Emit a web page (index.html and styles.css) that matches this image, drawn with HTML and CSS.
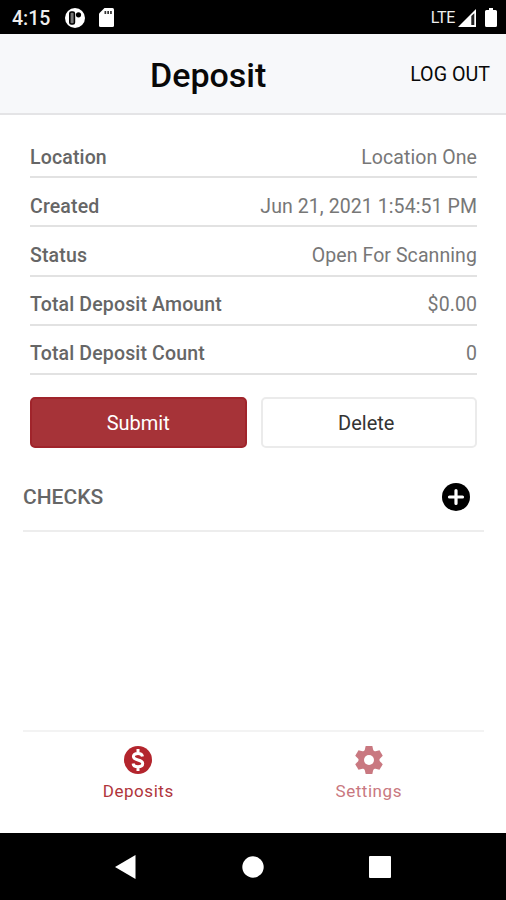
FILE: index.html
```html
<!DOCTYPE html>
<html lang="en">
<head>
    <meta charset="UTF-8">
    <meta name="viewport" content="width=device-width, initial-scale=1.0">
    <title>Deposit</title>
    <link rel="stylesheet" href="styles.css">
</head>
<body>
    <div class="status-bar">
        <span class="time">4:15</span>
        <svg class="icon-app" width="20" height="20" viewBox="0 0 20 20">
            <circle cx="10" cy="10" r="10" fill="#fff"/>
            <rect x="4.800" y="4" width="4.600" height="12" rx="1.500" fill="#777" stroke="#000" stroke-width="1.600"/>
            <circle cx="13.500" cy="6.800" r="2.600" fill="#000"/>
        </svg>
        <svg class="icon-sd" width="15" height="19" viewBox="0 0 15 19">
            <path d="M5.500 0H13.500q1.500 0 1.500 1.500V17.500q0 1.500-1.500 1.500H1.500Q0 19 0 17.500V5.500z" fill="#fff"/>
            <path d="M5.500 3h1.700v3H5.500zM8.300 3H10v3H8.300zM11.100 3h1.700v3h-1.700z" fill="#333"/>
        </svg>
        <span class="network">LTE</span>
        <svg class="icon-signal" width="18" height="18" viewBox="0 0 18 18">
            <path d="M18 0v18H0z" fill="#fff"/>
            <path d="M13.300 7l3-2.800v11.800h-3z" fill="#222"/>
        </svg>
        <svg class="icon-battery" width="12" height="19" viewBox="0 0 12 19">
            <path d="M4 0h4v2h2.500q1.500 0 1.500 1.500v14q0 1.500-1.500 1.500h-9Q0 19 0 17.500v-14Q0 2 1.500 2H4z" fill="#fff"/>
        </svg>
    </div>

    <div class="header">
        <h1 class="title">Deposit</h1>
        <a class="logout">LOG OUT</a>
    </div>

    <div class="content">
        <div class="details">
            <div class="row">
                <span class="label">Location</span>
                <span class="value">Location One</span>
            </div>
            <div class="row">
                <span class="label">Created</span>
                <span class="value">Jun 21, 2021 1:54:51 PM</span>
            </div>
            <div class="row">
                <span class="label">Status</span>
                <span class="value">Open For Scanning</span>
            </div>
            <div class="row">
                <span class="label">Total Deposit Amount</span>
                <span class="value">$0.00</span>
            </div>
            <div class="row">
                <span class="label">Total Deposit Count</span>
                <span class="value">0</span>
            </div>
        </div>

        <div class="buttons">
            <button class="button submit">Submit</button>
            <button class="button delete">Delete</button>
        </div>

        <div class="checks">
            <span>CHECKS</span>
            <svg class="icon-add" width="28" height="28" viewBox="0 0 28 28">
                <circle cx="14" cy="14" r="14" fill="#000"/>
                <path d="M14 7.500v13M7.500 14h13" stroke="#fff" stroke-width="3.200" stroke-linecap="round"/>
            </svg>
        </div>
    </div>

    <div class="tabs">
        <div class="tab active">
            <svg width="28" height="28" viewBox="0 0 28 28">
                <circle cx="14" cy="14" r="14" fill="#b3252d"/>
                <path d="M14 3v4M14 21v4M18.500 10.500C18.200 8.400 16.500 7.400 14 7.400c-2.700 0-4.600 1.100-4.600 3.200 0 2.200 1.800 2.700 4.600 3.400s4.700 1.400 4.700 3.500-2 3.200-4.700 3.200c-2.800 0-4.700-1.100-4.900-3.200" fill="none" stroke="#fff" stroke-width="3"/>
            </svg>
            <span>Deposits</span>
        </div>
        <div class="tab">
            <svg width="28" height="28" viewBox="0 0 28 28">
                <g fill="#c97880">
                    <circle cx="14" cy="14" r="10.500"/>
                    <path id="tooth" d="M9.500 5l1.200-5h6.600l1.200 5v18l-1.200 5h-6.600l-1.200-5z"/>
                    <use href="#tooth" transform="rotate(60 14 14)"/>
                    <use href="#tooth" transform="rotate(120 14 14)"/>
                </g>
                <circle cx="14" cy="14" r="5" fill="#fff"/>
            </svg>
            <span>Settings</span>
        </div>
    </div>

    <!-- Android navigation -->
    <div class="nav-bar">
        <svg width="21" height="24" viewBox="0 0 21 24"><path d="M20.500 0v24L0 12z" fill="#fff"/></svg>
        <svg width="22" height="22" viewBox="0 0 22 22"><circle cx="11" cy="11" r="10.700" fill="#fff"/></svg>
        <svg width="22" height="22" viewBox="0 0 22 22"><rect width="22" height="22" rx="1" fill="#fff"/></svg>
    </div>
</body>
</html>
```
FILE: styles.css
```css
* {
    box-sizing: border-box;
}

body {
    margin: 0;
    height: 900px;
    display: flex;
    flex-direction: column;
    background-color: #fff;
    font-family: Roboto, sans-serif;
    color: #666;
}

svg {
    display: block;
    flex-shrink: 0;
}

.status-bar {
    height: 34px;
    padding: 1px 9px 0 12px;
    display: flex;
    align-items: center;
    background-color: #000;
    color: #eee;
}

.time {
    width: 53px;
    padding-top: 1px;
    font-size: 19.5px;
    font-weight: 500;
}

.icon-sd {
    margin-left: 14px;
}

.network {
    margin-left: auto;
    font-size: 16px;
    letter-spacing: -0.3px;
}

.icon-signal {
    margin-left: 3px;
}

.icon-battery {
    margin-left: 9px;
}

.header {
    height: 81px;
    padding: 0 16px 0 150px;
    display: flex;
    align-items: center;
    justify-content: space-between;
    background-color: #f7f8fa;
    border-bottom: 2px solid #e4e4e6;
    color: #080808;
}

.title {
    margin: 2px 0 0;
    font-size: 34px;
    font-weight: 500;
}

.logout {
    margin-top: 1px;
    font-size: 19.7px;
}

.content {
    flex: 1;
    padding: 14px 22px 0 23px;
}

.details {
    padding: 0 7px;
}

.row {
    height: 49.2px;
    padding-top: 9px;
    display: flex;
    align-items: center;
    justify-content: space-between;
    border-bottom: 2px solid #e2e2e2;
    font-size: 19.5px;
}

.label {
    font-weight: 500;
    letter-spacing: 0.15px;
}

.value {
    color: #777;
    letter-spacing: 0.08px;
}

.buttons {
    display: grid;
    grid-template-columns: 1fr 1fr;
    gap: 14px;
    padding: 22px 7px 0;
}

.button {
    height: 51px;
    padding: 2px 6px 0;
    border: 2px solid #ebebeb;
    border-radius: 5px;
    background-color: #fff;
    color: #333;
    font-family: inherit;
    font-size: 20px;
}

.submit {
    border-color: #a0242b;
    background-color: #a63338;
    color: #fff;
}

.delete {
    padding-right: 11px;
}

.checks {
    height: 84px;
    padding: 16px 14px 0 0;
    display: flex;
    align-items: center;
    justify-content: space-between;
    border-bottom: 2px solid #ededed;
    font-size: 21px;
    font-weight: 500;
}

.tabs {
    height: 103px;
    margin: 0 22px 0 23px;
    padding-top: 14px;
    display: grid;
    grid-template-columns: 1fr 1fr;
    border-top: 2px solid #f3f3f3;
}

.tab {
    display: flex;
    flex-direction: column;
    align-items: center;
    gap: 7px;
    color: #c97880;
    font-size: 17px;
    letter-spacing: 0.55px;
}

.active {
    color: #b0353c;
}

.nav-bar {
    height: 67px;
    padding: 0 115px;
    display: flex;
    align-items: center;
    justify-content: space-between;
    background-color: #000;
}
```
